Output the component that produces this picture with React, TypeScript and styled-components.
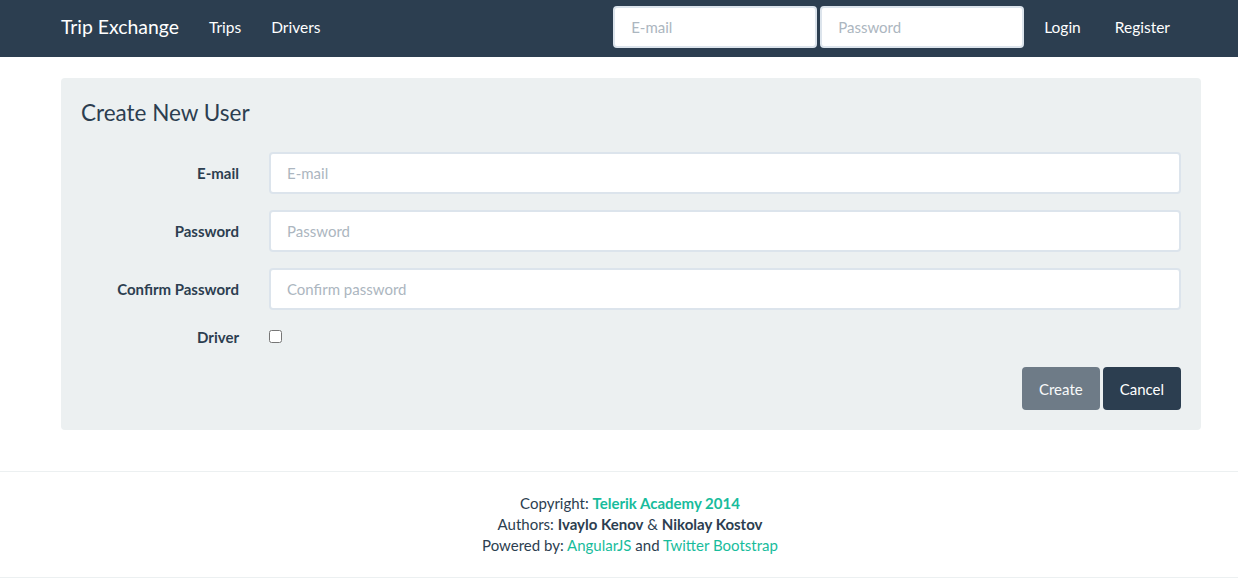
import React from "react";
import styled, { createGlobalStyle } from "styled-components";

const Global = createGlobalStyle`
  * { box-sizing: border-box; }
  body {
    margin: 0;
    font-family: Lato, "Open Sans", sans-serif;
    font-size: 15px;
    line-height: 1.42857;
    color: #2c3e50;
    background: #ffffff;
  }
  input::placeholder { color: #acb6c0; opacity: 1; }
`;

const NavBar = styled.nav`
  height: 57px;
  background: #2c3e50;
`;

const NavInner = styled.div`
  width: 1140px;
  margin-left: 61px;
  height: 54px;
  display: flex;
  align-items: center;
`;

const Brand = styled.a`
  font-size: 19.4px;
  color: #ffffff;
  padding-right: 15px;
  text-decoration: none;
  line-height: 1;
`;

const NavLink = styled.a`
  color: #ffffff;
  padding: 0 15px;
  font-size: 15.5px;
  text-decoration: none;
`;

const NavRightLink = styled(NavLink)`
  padding: 0 17px;
`;

const NavRight = styled.div`
  margin-left: auto;
  margin-right: 14px;
  display: flex;
  align-items: center;
`;

const NavForm = styled.form`
  display: flex;
  gap: 3px;
  margin-right: 3px;
`;

const NavInput = styled.input`
  width: 204px;
  height: 42px;
  border: 2px solid #dce4ec;
  border-radius: 4px;
  padding: 0 16px;
  font-family: inherit;
  font-size: 15px;
  color: #2c3e50;
  background: #fff;
`;

const Container = styled.div`
  width: 1140px;
  margin-left: 61px;
`;

const Well = styled.div`
  margin-top: 21px;
  background: #ecf0f1;
  border-radius: 4px;
  padding: 20px;
`;

const Title = styled.h3`
  margin: 2px 0 26px;
  font-size: 22.5px;
  font-weight: 400;
  line-height: 26px;
`;

const Row = styled.div<{ $check?: boolean }>`
  display: grid;
  grid-template-columns: 158px 912px;
  column-gap: 30px;
  align-items: center;
  margin-bottom: 16px;
  min-height: ${(p) => (p.$check ? "21px" : "42px")};
`;

const Label = styled.label`
  text-align: right;
  font-weight: 700;
  padding-top: 1px;
`;

const Field = styled.input`
  width: 100%;
  height: 42px;
  border: 2px solid #dce4ec;
  border-radius: 4px;
  padding: 0 16px;
  font-family: inherit;
  font-size: 15px;
  color: #2c3e50;
  background: #fff;
`;

const Check = styled.input`
  margin: 1px 0 0;
  width: 13px;
  height: 13px;
`;

const Actions = styled.div`
  display: flex;
  justify-content: flex-end;
  gap: 3px;
  margin-top: 19px;
`;

const Button = styled.button<{ $disabled?: boolean }>`
  height: 43px;
  padding: 0 15px;
  border: 2px solid #2c3e50;
  border-radius: 4px;
  background: #2c3e50;
  color: #fff;
  font-family: inherit;
  font-size: 15px;
  opacity: ${(p) => (p.$disabled ? 0.65 : 1)};
`;

const Footer = styled.footer`
  margin-top: 41px;
  border-top: 1px solid #ecf0f1;
  border-bottom: 1px solid #ecf0f1;
  padding: 21px 0 21px 22px;
  text-align: center;
  line-height: 21px;
`;

const Link = styled.a`
  color: #18bc9c;
  text-decoration: none;
`;

const BoldLink = styled(Link)`
  font-weight: 700;
`;

const Strong = styled.strong`
  font-weight: 700;
`;

export default function App() {
  return (
    <>
      <Global />
      <NavBar>
        <NavInner>
          <Brand href="#">Trip Exchange</Brand>
          <NavLink href="#">Trips</NavLink>
          <NavLink href="#">Drivers</NavLink>
          <NavRight>
            <NavForm>
              <NavInput placeholder="E-mail" />
              <NavInput type="password" placeholder="Password" />
            </NavForm>
            <NavRightLink href="#">Login</NavRightLink>
            <NavRightLink href="#">Register</NavRightLink>
          </NavRight>
        </NavInner>
      </NavBar>
      <Container>
        <Well>
          <Title>Create New User</Title>
          <Row>
            <Label>E-mail</Label>
            <Field placeholder="E-mail" />
          </Row>
          <Row>
            <Label>Password</Label>
            <Field type="password" placeholder="Password" />
          </Row>
          <Row>
            <Label>Confirm Password</Label>
            <Field type="password" placeholder="Confirm password" />
          </Row>
          <Row $check>
            <Label>Driver</Label>
            <div>
              <Check type="checkbox" />
            </div>
          </Row>
          <Actions>
            <Button $disabled>Create</Button>
            <Button>Cancel</Button>
          </Actions>
        </Well>
      </Container>
      <Footer>
        <div>
          Copyright: <BoldLink href="#">Telerik Academy 2014</BoldLink>
        </div>
        <div>
          Authors: <Strong>Ivaylo Kenov</Strong> &amp; <Strong>Nikolay Kostov</Strong>
        </div>
        <div>
          Powered by: <Link href="#">AngularJS</Link> and <Link href="#">Twitter Bootstrap</Link>
        </div>
      </Footer>
    </>
  );
}
